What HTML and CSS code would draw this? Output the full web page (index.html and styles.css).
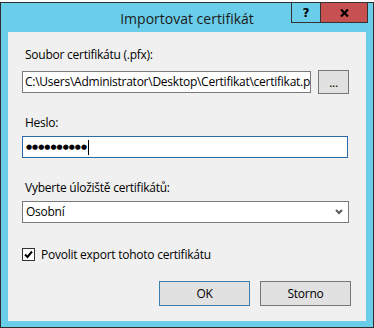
FILE: index.html
```html
<!DOCTYPE html>
<html lang="cs">
<head>
    <meta charset="UTF-8">
    <title>Importovat certifikát</title>
    <link rel="stylesheet" href="styles.css">
</head>
<body>
    <div class="window">
        <div class="titlebar">
            <div class="title">Importovat certifikát</div>
            <div class="controls">
                <div class="ctl help">?</div>
                <div class="ctl close">
                    <svg width="9" height="8" viewBox="0 0 9 8">
                        <path d="M1 0.5 L8 7.5 M8 0.5 L1 7.5" stroke="#000" stroke-width="2.2" fill="none"/>
                    </svg>
                </div>
            </div>
        </div>
        <div class="content">
            <div class="label">Soubor certifikátu (.pfx):</div>
            <div class="file-row">
                <div class="field file-field">C:\Users\Administrator\Desktop\Certifikat\certifikat.p</div>
                <div class="btn browse">...</div>
            </div>

            <div class="label heslo">Heslo:</div>
            <div class="field password-field">
                <span class="dots">●●●●●●●●●●</span><span class="caret"></span>
            </div>

            <div class="label store">Vyberte úložiště certifikátů:</div>
            <div class="field select-field">
                <span>Osobní</span>
                <svg class="chevron" width="8" height="6" viewBox="0 0 8 6">
                    <path d="M1 1 L4 4 L7 1" stroke="#5a5a5a" stroke-width="2" fill="none"/>
                </svg>
            </div>

            <div class="check-row">
                <div class="checkbox">
                    <svg width="11" height="11" viewBox="0 0 11 11">
                        <path d="M2 5.5 L4.5 8 L9 2.5" stroke="#000" stroke-width="2" fill="none"/>
                    </svg>
                </div>
                <span>Povolit export tohoto certifikátu</span>
            </div>

            <div class="buttons">
                <div class="btn default">OK</div>
                <div class="btn">Storno</div>
            </div>
        </div>
    </div>
</body>
</html>
```

FILE: styles.css
```css
html, body {
    margin: 0;
    padding: 0;
    background-color: #ffffff;
    font-family: "Open Sans", "Noto Sans", sans-serif;
    color: #000;
}

.window {
    box-sizing: border-box;
    width: 374px;
    height: 326px;
    margin-top: 2px;
    border: 1px solid #2e2e2e;
    background-color: #6acdea;
    padding: 0 7px 6px 7px;
    display: flex;
    flex-direction: column;
}

.titlebar {
    height: 29px;
    position: relative;
    display: flex;
    justify-content: center;
    align-items: center;
}

.title {
    font-size: 14px;
    color: #1b1b1b;
    margin-top: 1px;
}

.controls {
    position: absolute;
    top: -1px;
    right: -2px;
    display: flex;
    height: 21px;
    border: 1px solid #333;
    box-sizing: border-box;
}

.ctl {
    display: flex;
    align-items: center;
    justify-content: center;
}

.help {
    width: 28px;
    border-right: 1px solid #333;
    font-family: "DejaVu Sans", sans-serif;
    font-weight: bold;
    font-size: 12px;
}

.close {
    width: 46px;
    background-color: #c75050;
}

.content {
    flex: 1;
    background-color: #f0f0f0;
    padding: 15px 0 0 14px;
    font-size: 12px;
    letter-spacing: -0.25px;
}

.label {
    line-height: 16px;
    margin-left: 3px;
}

.file-row {
    display: flex;
    align-items: center;
    margin-top: 7px;
    height: 24px;
}

.field {
    box-sizing: border-box;
    height: 22px;
    border: 1px solid #7a7a7a;
    background-color: #fff;
    padding: 0 2px;
    line-height: 20px;
    white-space: nowrap;
    overflow: hidden;
}

.file-field {
    width: 289px;
}

.btn {
    box-sizing: border-box;
    background-color: #e1e1e1;
    border: 1px solid #777;
    display: flex;
    align-items: center;
    justify-content: center;
}

.browse {
    width: 31px;
    height: 24px;
    margin-left: 7px;
}

.heslo {
    margin-top: 21px;
}

.password-field {
    width: 326px;
    margin-top: 5px;
    border-color: #2b6aa6;
    display: flex;
    align-items: center;
    padding-left: 3px;
}

.dots {
    font-family: "DejaVu Sans", sans-serif;
    font-size: 7px;
    letter-spacing: 0px;
}

.caret {
    display: inline-block;
    width: 1px;
    height: 15px;
    background-color: #000;
    margin-left: 1px;
}

.store {
    margin-top: 22px;
}

.select-field {
    width: 327px;
    margin-top: 5px;
    display: flex;
    align-items: center;
    justify-content: space-between;
    padding: 0 5px 0 3px;
}

.check-row {
    display: flex;
    align-items: center;
    margin-top: 23px;
    height: 16px;
}

.checkbox {
    box-sizing: border-box;
    width: 13px;
    height: 13px;
    border: 1px solid #333;
    background-color: #fff;
    display: flex;
    align-items: center;
    justify-content: center;
    margin-right: 6px;
}

.buttons {
    display: flex;
    justify-content: flex-end;
    gap: 10px;
    margin-top: 19px;
    padding-right: 15px;
}

.buttons .btn {
    width: 91px;
    height: 25px;
}

.buttons .default {
    border-color: #3c7fb1;
}
```
